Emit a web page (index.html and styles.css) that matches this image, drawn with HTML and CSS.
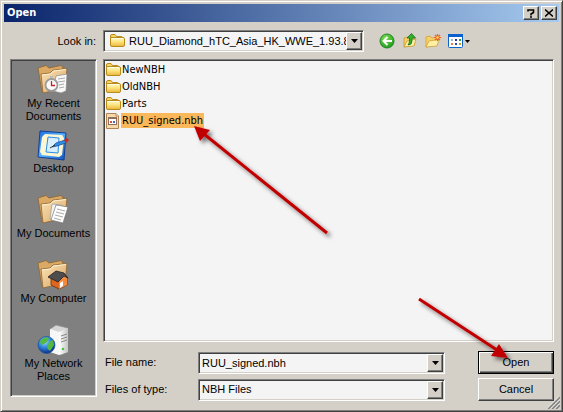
FILE: index.html
```html
<!DOCTYPE html>
<html lang="en">
<head>
<meta charset="utf-8">
<title>Open</title>
<link rel="stylesheet" href="styles.css">
</head>
<body>
<svg class="defs" aria-hidden="true">
  <defs>
    <linearGradient id="yellow" x1="0" y1="0" x2="0" y2="1"><stop offset="0" stop-color="#fffbc9"/><stop offset=".5" stop-color="#fbe27c"/><stop offset="1" stop-color="#e9b53a"/></linearGradient>
    <linearGradient id="tan" x1="0" y1="0" x2="1" y2="1"><stop offset="0" stop-color="#fbe3b8"/><stop offset="1" stop-color="#d9a662"/></linearGradient>
    <linearGradient id="server" x1="0" y1="0" x2="1" y2="0"><stop offset="0" stop-color="#fff"/><stop offset="1" stop-color="#c4c4c4"/></linearGradient>
    <radialGradient id="globe" cx=".4" cy=".3" r=".7"><stop offset="0" stop-color="#9fe0ff"/><stop offset=".5" stop-color="#2f86dc"/><stop offset="1" stop-color="#0c2f86"/></radialGradient>
    <radialGradient id="green" cx=".4" cy=".3" r=".8"><stop offset="0" stop-color="#7be04e"/><stop offset="1" stop-color="#159416"/></radialGradient>
    <linearGradient id="desk" x1="0" y1="0" x2="1" y2="1"><stop offset="0" stop-color="#1d6fe0"/><stop offset=".5" stop-color="#55b4ff"/><stop offset="1" stop-color="#0f4dbb"/></linearGradient>
    <filter id="shadow" x="-20%" y="-20%" width="150%" height="150%"><feDropShadow dx="3" dy="3" stdDeviation="2" flood-color="#000" flood-opacity=".55"/></filter>
    <symbol id="folder" viewBox="0 0 16 16">
      <path d="M1.500 12.500V3Q1.500 1.500 3 1.500H6L7.500 3.500H12.500Q13.500 3.500 13.500 5V6" fill="#f5d563" stroke="#b98a1c"/>
      <path d="M1.500 12.500V5.500Q1.500 4.500 3 4.500H14Q15.500 4.500 15.500 6V12Q15.500 13.500 14 13.500H3Q1.500 13.500 1.500 12.500Z" fill="url(#yellow)" stroke="#b98a1c"/>
      <path d="M3 5.500H14" stroke="#fffde8"/>
    </symbol>
    <symbol id="big-folder" viewBox="0 0 32 32">
      <path d="M1 4L9 1.500L12 4L24 1.500L26 4V20L5 28Z" fill="#dba966" stroke="#8c6531" stroke-width=".8"/>
      <path d="M4 10L13 9L16 6L30 4.500L28 24L6 29Z" fill="url(#tan)" stroke="#8c6531" stroke-width=".8"/>
      <path d="M5 11L13.500 10L16.500 7L29 5.500" fill="none" stroke="#fff0cf"/>
    </symbol>
    <symbol id="down" viewBox="0 0 7 4"><path d="M0 0H7L3.500 4Z"/></symbol>
  </defs>
</svg>

<main class="dialog">
  <header class="titlebar">
    <h1>Open</h1>
    <button class="caption" type="button" aria-label="Help"><svg width="8" height="9" viewBox="0 0 8 9"><path d="M1 2.500V1H6.500V3.500L4 5V6.500M3 8H5" fill="none" stroke="#000" stroke-width="1.600"/></svg></button>
    <button class="caption" type="button" aria-label="Close"><svg width="8" height="8" viewBox="0 0 8 8"><path d="M0 .5L8 7.500M8 .5L0 7.500" stroke="#000" stroke-width="1.500"/></svg></button>
  </header>

  <div class="toolbar">
    <label for="look-in">Look in:</label>
    <div class="combo look">
      <svg class="combo-icon" width="16" height="16"><use href="#folder"/></svg>
      <select id="look-in"><option>RUU_Diamond_hTC_Asia_HK_WWE_1.93.8</option></select>
      <span class="arrow"><svg width="7" height="4"><use href="#down"/></svg></span>
    </div>
    <div class="tools">
      <button type="button" aria-label="Back"><svg width="16" height="16" viewBox="0 0 16 16"><circle cx="8" cy="8" r="7" fill="url(#green)" stroke="#23862a"/><path d="M13 8H4.500M8.500 4L4.500 8L8.500 12" fill="none" stroke="#fff" stroke-width="2"/></svg></button>
      <button type="button" aria-label="Up one level"><svg width="16" height="16" viewBox="0 0 16 16"><path d="M2 14V5L6 4L7 5L12 4V12Z" fill="#f3d168" stroke="#c9982c" stroke-width=".8"/><path d="M2 14L5 8L14 6L12 13Z" fill="#fff0a5" stroke="#c9982c" stroke-width=".8"/><path d="M6 12Q10 12 10 8V5H13.500L9.500 .5L5 5H7.500V8Q7.500 10 6 12Z" fill="#31b42c" stroke="#167017" stroke-width=".8"/></svg></button>
      <button type="button" aria-label="Create new folder"><svg width="16" height="16" viewBox="0 0 16 16"><path d="M1 14V4L5 3L7 5L12 4V12Z" fill="#f3d168" stroke="#d1a23a" stroke-width=".8"/><path d="M1 14L4 8L14 6.500L12 13Z" fill="#fff0a5" stroke="#d1a23a" stroke-width=".8"/><path d="M12.500 1V8M9 4.500H16M10 2L15 7M15 2L10 7" stroke="#f05a28" stroke-width="1.200"/><circle cx="12.500" cy="4.500" r="1.200" fill="#ffd94a"/></svg></button>
      <button type="button" aria-label="View menu"><svg width="23" height="16" viewBox="0 0 23 16"><rect x=".5" y="1.500" width="14" height="13" rx="1" fill="#fff" stroke="#0b62cf"/><path d="M0 1H15V4H0Z" fill="#0b62cf"/><path d="M3 6H5V8H3Z" fill="#a8a8e8"/><path d="M7 6H9V8H7Z" fill="#3030a0"/><path d="M11 6H13V8H11Z" fill="#28a038"/><path d="M3 10H5V12H3Z" fill="#f07850"/><path d="M7 10H9V12H7Z" fill="#2848b0"/><path d="M11 10H13V12H11Z" fill="#c8a020"/><path d="M17 7H22L19.500 10Z"/></svg></button>
    </div>
  </div>

  <div class="content">
    <nav class="places" aria-label="Places">
      <button type="button"><svg width="32" height="32" viewBox="0 0 32 32"><use href="#big-folder"/><path d="M19 12L30 10L29 27L24 29L16 27Z" fill="#f8f8f8" stroke="#888" stroke-width=".7"/><path d="M21 15L28 14M21 18L28 17M22 21L27 20M22 24L27 23" stroke="#aaa"/><circle cx="14.500" cy="21" r="6" fill="#fafafa" stroke="#9a9a9a" stroke-width="1.800"/><path d="M13 13H16" stroke="#bbb" stroke-width="2"/><path d="M14.500 17V21.500H18" fill="none" stroke="#cf2020" stroke-width="1.300"/></svg><span>My Recent<br>Documents</span></button>
      <button type="button"><svg width="32" height="32" viewBox="0 0 32 32"><path d="M3 2L29 4L27 31L1 28Z" fill="url(#desk)" stroke="#123f98"/><path d="M8 5L25 6L27 9L25 26L22 28L5 26L3 23L5 8Z" fill="#fff7d2"/><path d="M11 8L22 9L21 24L9 23Z" fill="#d7efff" stroke="#2b8ce8"/><path d="M15 18L19 14L28 11L29 14L20 17Z" fill="#2f8de8" stroke="#174789" stroke-width=".7"/><path d="M27 11L30 9L32 11L29 14Z" fill="#c82a1e"/><path d="M13 19L18 16" stroke="#333"/></svg><span>Desktop</span></button>
      <button type="button"><svg width="32" height="32" viewBox="0 0 32 32"><use href="#big-folder"/><path d="M15 10L25 11L21 26L13 25Z" fill="#f3f3f3" stroke="#999" stroke-width=".7"/><path d="M19 11L31 13L26 29L14 26Z" fill="#fff" stroke="#777" stroke-width=".7"/><path d="M20 15L28 17M19 18L27 20M18 21L26 23M17 24L24 26" stroke="#aaa"/></svg><span>My Documents</span></button>
      <button type="button"><svg width="32" height="32" viewBox="0 0 32 32"><use href="#big-folder"/><path d="M14 19L22 22L30 18V26L22 30L14 26Z" fill="#df6520" stroke="#6c2d0a" stroke-width=".8"/><path d="M22 22L26 16L30 19V26L22 30Z" fill="#f58a3d"/><path d="M11 18L19 12L27 14L31 19L27 17L21 23Z" fill="#4d4d4d" stroke="#222" stroke-width=".8"/><path d="M23 24L26 22V27L23 29Z" fill="#fff"/></svg><span>My Computer</span></button>
      <button type="button"><svg width="32" height="32" viewBox="0 0 32 32"><path d="M13 5L19 1L31 4V28L24 31L13 28Z" fill="#d5d5d5" stroke="#888" stroke-width=".7"/><path d="M13 5L22 8V31L13 28Z" fill="#f7f7f7"/><path d="M22 8L31 4V28L22 31Z" fill="url(#server)"/><path d="M24 12L30 10M24 15L30 13M24 18L30 16" stroke="#888"/><circle cx="26" cy="25" r="1.300" fill="#48c738"/><circle cx="9.500" cy="21" r="8.500" fill="url(#globe)" stroke="#17509b" stroke-width=".7"/><path d="M3 17Q7 12 12 14L10 18L7 20L4 21ZM12 18L16 16L17 21L13 27L10 24Z" fill="#56b840"/></svg><span>My Network<br>Places</span></button>
    </nav>

    <section class="main">
      <ul class="files" aria-label="Files">
        <li><svg width="16" height="16"><use href="#folder"/></svg><span>NewNBH</span></li>
        <li><svg width="16" height="16"><use href="#folder"/></svg><span>OldNBH</span></li>
        <li><svg width="16" height="16"><use href="#folder"/></svg><span>Parts</span></li>
        <li class="selected"><svg width="16" height="16" viewBox="0 0 16 16"><path d="M1.500 .5H11L13.500 3V15.500H1.500Z" fill="#f6d9ab" stroke="#b08452"/><path d="M11 .5V3H13.500" fill="#fff" stroke="#b08452"/><rect x="3.500" y="4.500" width="8" height="7" fill="#fff" stroke="#8f7059"/><path d="M3 5H12" stroke="#8f7059" stroke-width="2"/><path d="M5 8H7V10H5Z" fill="#d04f35"/><path d="M8 8H10V10H8Z" fill="#4864c0"/></svg><span>RUU_signed.nbh</span></li>
      </ul>

      <form class="form">
        <label for="file-name">File name:</label>
        <div class="combo">
          <input id="file-name" type="text" value="RUU_signed.nbh">
          <button class="arrow" type="button" aria-label="Recent file names"><svg width="7" height="4"><use href="#down"/></svg></button>
        </div>
        <button class="action default" type="button">Open</button>
        <label for="file-type">Files of type:</label>
        <div class="combo">
          <select id="file-type"><option>NBH Files</option></select>
          <span class="arrow"><svg width="7" height="4"><use href="#down"/></svg></span>
        </div>
        <button class="action" type="button">Cancel</button>
      </form>
    </section>
  </div>

  <svg class="grip" width="12" height="12" viewBox="0 0 12 12" aria-hidden="true"><path d="M0 12L12 0M4 12L12 4M8 12L12 8" stroke="#808080" stroke-width="1.800"/><path d="M-1 11.500L11.500 -1M3 11.500L12 2.500M7 11.500L12 6.500" stroke="#fff" stroke-width=".8"/></svg>
  <svg class="pointer to-file" width="150" height="124" viewBox="0 0 150 124" aria-hidden="true"><g filter="url(#shadow)" fill="#c00000"><path d="M10 11L138 114" stroke="#c00000" stroke-width="3"/><path d="M5 7L21 11L11 22Z"/></g></svg>
  <svg class="pointer to-open" width="106" height="76" viewBox="0 0 106 76" aria-hidden="true"><g filter="url(#shadow)" fill="#c00000"><path d="M4 4L82 55" stroke="#c00000" stroke-width="3"/><path d="M93 63L84 49L76 61Z"/></g></svg>
</main>
</body>
</html>
```
FILE: styles.css
```css
* {
  box-sizing: border-box;
}

body {
  margin: 0;
  background: #d4d0c8;
  color: #000;
  font: 11px/13px "Liberation Sans", Arial, sans-serif;
}

button,
input,
select {
  font: inherit;
  color: inherit;
}

svg {
  display: block;
  flex: none;
}

.defs {
  position: absolute;
  width: 0;
  height: 0;
}

.dialog {
  position: relative;
  display: flex;
  flex-direction: column;
  min-height: 100vh;
  padding: 2px;
  border: 1px solid;
  border-color: #d4d0c8 #404040 #404040 #d4d0c8;
  box-shadow: inset 1px 1px #fff, inset -1px -1px #808080;
}

.titlebar {
  display: flex;
  align-items: center;
  gap: 2px;
  height: 18px;
  margin: 1px;
  padding: 0 2px 0 3px;
  background: linear-gradient(90deg, #0a246a, #a6caf0);
}

.titlebar h1 {
  flex: 1;
  margin: 0;
  color: #fff;
  font: bold 11px/16px "DejaVu Sans Condensed", "DejaVu Sans", sans-serif;
}

.caption,
.arrow,
.action {
  display: flex;
  align-items: center;
  justify-content: center;
  padding: 0;
  background: #d4d0c8;
  border: 1px solid;
  border-color: #fff #404040 #404040 #fff;
  border-radius: 0;
  box-shadow: inset -1px -1px #808080;
}

.caption {
  width: 16px;
  height: 14px;
}

.toolbar {
  display: grid;
  grid-template-columns: 93px minmax(120px, 261px) 1fr;
  align-items: center;
  padding: 7px 7px;
}

.toolbar > label {
  justify-self: end;
  padding-right: 7px;
}

.combo {
  display: flex;
  align-items: center;
  height: 22px;
  min-width: 0;
  padding: 1px;
  background: #f4f4f4;
  border: 1px solid;
  border-color: #808080 #fff #fff #808080;
  box-shadow: inset 1px 1px #404040, inset -1px -1px #d4d0c8;
}

.combo-icon {
  margin-left: 4px;
}

.combo input,
.combo select {
  flex: 1;
  min-width: 0;
  height: 18px;
  padding: 0 2px;
  border: 0;
  outline: 0;
  background: transparent;
  appearance: none;
}

.look select {
  padding: 0 0 0 4px;
  overflow: hidden;
  text-overflow: clip;
}

.arrow {
  flex: none;
  width: 16px;
  height: 18px;
  pointer-events: none;
}

.tools {
  display: flex;
  gap: 7px;
  padding-left: 15px;
}

.tools button {
  padding: 0;
  border: 0;
  background: none;
}

.content {
  flex: 1;
  display: grid;
  grid-template-columns: 87px 1fr;
  gap: 6px;
  padding: 0 6px 8px 7px;
}

.places,
.files {
  border: 1px solid;
  border-color: #808080 #fff #fff #808080;
  box-shadow: inset 1px 1px #404040, inset -1px -1px #d4d0c8;
}

.places {
  display: flex;
  flex-direction: column;
  margin-bottom: 4px;
  padding-top: 4px;
  background: #808080;
}

.places button {
  display: flex;
  flex-direction: column;
  align-items: center;
  height: 65px;
  padding: 0;
  border: 0;
  background: none;
}

.places svg {
  margin-right: 2px;
}

.places span {
  margin-top: 1px;
}

.main {
  display: flex;
  flex-direction: column;
  gap: 9px;
  min-width: 0;
}

.files {
  flex: 1;
  margin: 0;
  padding: 1px;
  list-style: none;
  background: #f4f4f4;
  font: 11px/15px "DejaVu Sans Condensed", "DejaVu Sans", sans-serif;
}

.files li {
  display: flex;
  align-items: center;
  height: 17px;
}

.files span {
  padding: 0 1px;
}

.selected span {
  background: #fbb85b;
}

.form {
  display: grid;
  grid-template-columns: 95px 1fr 76px;
  row-gap: 4px;
  align-items: center;
}

.form label {
  padding-left: 2px;
}

.form .combo {
  margin-right: 33px;
}

.action {
  height: 23px;
}

.default {
  border-color: #000;
  box-shadow: inset 1px 1px #fff, inset -1px -1px #404040, inset -2px -2px #808080;
}

.grip {
  position: absolute;
  right: 2px;
  bottom: 2px;
}

.pointer {
  position: absolute;
  pointer-events: none;
}

.to-file {
  left: 188px;
  top: 118px;
}

.to-open {
  right: 41px;
  bottom: 40px;
}
```
